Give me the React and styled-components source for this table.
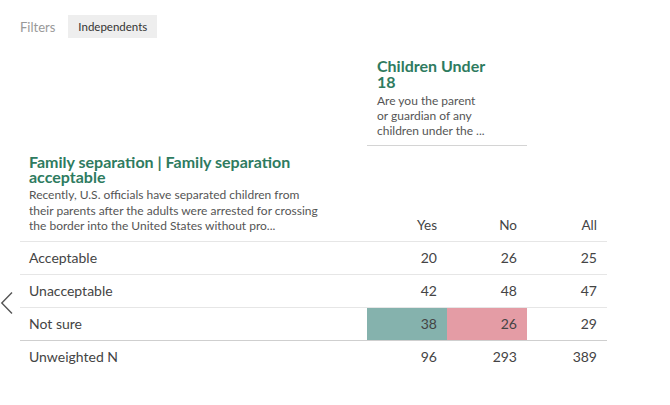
import React from "react";
import styled, { createGlobalStyle } from "styled-components";

const GlobalStyle = createGlobalStyle`
  html, body {
    margin: 0;
    padding: 0;
    background: #fff;
    font-family: Lato, "Open Sans", sans-serif;
  }
`;

const rows = [
  { label: "Acceptable", values: [20, 26, 25] },
  { label: "Unacceptable", values: [42, 48, 47] },
  { label: "Not sure", values: [38, 26, 29], tints: ["#85b2ad", "#e49ca5", null], strong: true },
];

const totals = { label: "Unweighted N", values: [96, 293, 389] };

function App() {
  return (
    <Page>
      <GlobalStyle />
      <FilterBar>
        <FilterLabel>Filters</FilterLabel>
        <Chip>Independents</Chip>
      </FilterBar>

      <Table>
        <Spacer />
        <GroupHeader>
          <GroupTitle>Children Under 18</GroupTitle>
          <GroupDesc>Are you the parent or guardian of any children under the ...</GroupDesc>
        </GroupHeader>
        <Spacer />

        <QuestionCell>
          <QuestionTitle>Family separation | Family separation acceptable</QuestionTitle>
          <QuestionDesc>
            Recently, U.S. officials have separated children from their parents
            after the adults were arrested for crossing the border into the United
            States without pro...
          </QuestionDesc>
        </QuestionCell>
        <ColHead>Yes</ColHead>
        <ColHead>No</ColHead>
        <ColHead>All</ColHead>

        {rows.map((row) => (
          <React.Fragment key={row.label}>
            <LabelCell $strong={row.strong}>{row.label}</LabelCell>
            {row.values.map((v, i) => (
              <NumCell
                key={i}
                $strong={row.strong}
                $tint={row.tints ? row.tints[i] : null}
              >
                {v}
              </NumCell>
            ))}
          </React.Fragment>
        ))}

        <LabelCell $last>{totals.label}</LabelCell>
        {totals.values.map((v, i) => (
          <NumCell key={i} $last>
            {v}
          </NumCell>
        ))}
      </Table>

      <PrevButton aria-label="Previous">
        <svg width="14" height="24" viewBox="0 0 14 24" fill="none">
          <path d="M12 1.5 L1.8 12 L12 22.5" stroke="#555" strokeWidth="1.4" />
        </svg>
      </PrevButton>
    </Page>
  );
}

const Page = styled.div`
  position: relative;
  width: 670px;
  height: 405px;
  padding-top: 15px;
  box-sizing: border-box;
`;

const FilterBar = styled.div`
  display: flex;
  align-items: center;
  gap: 13px;
  margin-left: 20px;
  height: 23px;
`;

const FilterLabel = styled.span`
  font-size: 13px;
  color: #999;
`;

const Chip = styled.span`
  display: flex;
  align-items: center;
  height: 23px;
  padding: 0 10px;
  background: #eeeeee;
  font-size: 11.5px;
  color: #333;
`;

const Table = styled.div`
  display: grid;
  grid-template-columns: 347px 80px 80px 80px;
  margin: 15px 0 0 20px;
  color: #444;
`;

const Spacer = styled.div``;

const GroupHeader = styled.div`
  grid-column: span 2;
  padding: 5px 10px 7px;
  border-bottom: 1px solid #d4d4d4;
`;

const GroupTitle = styled.div`
  width: 112px;
  font-size: 16px;
  font-weight: 700;
  line-height: 16px;
  color: #2e7b60;
`;

const GroupDesc = styled.div`
  width: 108px;
  margin-top: 3px;
  font-size: 12px;
  line-height: 15px;
  color: #555;
`;

const QuestionCell = styled.div`
  padding: 8px 9px 7px;
  border-bottom: 1px solid #e6e6e6;
`;

const QuestionTitle = styled.div`
  max-width: 290px;
  font-size: 16px;
  font-weight: 700;
  line-height: 15px;
  color: #2e7b60;
`;

const QuestionDesc = styled.div`
  max-width: 295px;
  margin-top: 3px;
  font-size: 12px;
  line-height: 15.5px;
  color: #555;
`;

const ColHead = styled.div`
  display: flex;
  align-items: flex-end;
  justify-content: flex-end;
  padding: 0 10px 8px 0;
  font-size: 13.5px;
  border-bottom: 1px solid #e6e6e6;
`;

const Cell = styled.div`
  display: flex;
  align-items: center;
  height: 32px;
  font-size: 14px;
  border-bottom: 1px solid ${(p) => (p.$strong ? "#cfcfcf" : "#e6e6e6")};
  ${(p) => p.$last && "border-bottom: none;"}
`;

const LabelCell = styled(Cell)`
  padding-left: 9px;
`;

const NumCell = styled(Cell)`
  justify-content: flex-end;
  padding-right: 10px;
  background: ${(p) => p.$tint || "transparent"};
`;

const PrevButton = styled.div`
  position: absolute;
  left: 0;
  top: 291px;
  width: 14px;
  height: 24px;
`;

export default App;
